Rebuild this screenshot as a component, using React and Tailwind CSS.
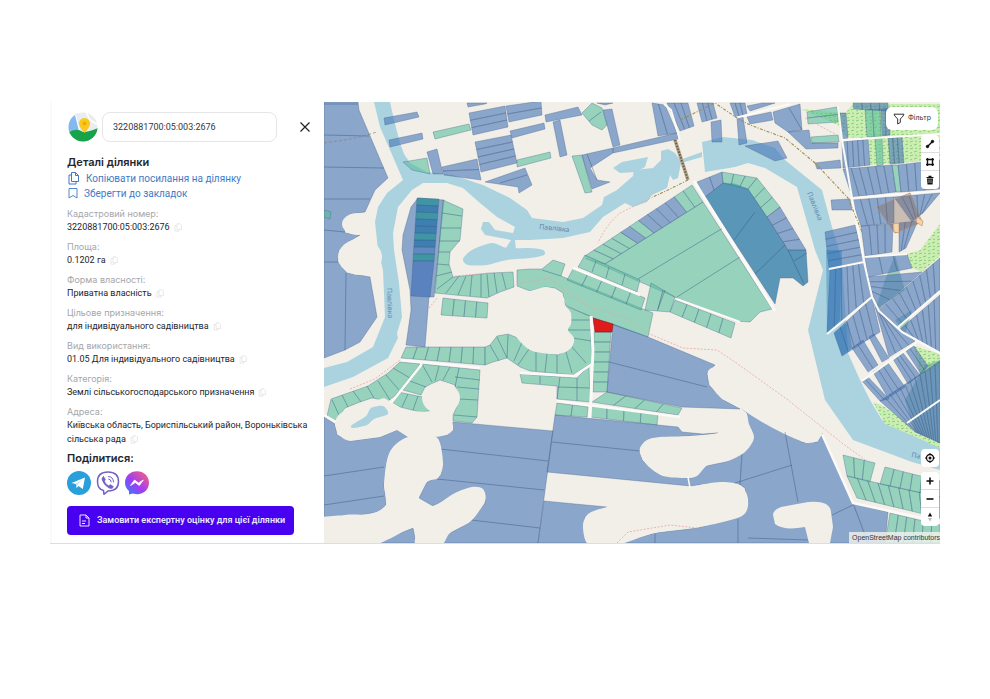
import React from "react";

const BLUE = "#4674b8";
const GREEN = "#58be9e";
const LAND = "#f2efe9";
const WATER = "#aad3df";
const fills = { b: BLUE, g: GREEN, d: "#08669e", t: "#0f8a8c" };

const parse = (s) => s.trim().split(/\s+/).map((p) => p.split(",").map(Number));

function Plot({ t = "b", p, o = 0.6 }) {
  return <polygon points={p} fill={fills[t]} fillOpacity={o} stroke="#3d5a80" strokeOpacity="0.55" strokeWidth="0.6" />;
}

/* A four-cornered block cut into n parcels between its first and third side. */
function Block({ t = "b", p, n = 1, kinds, o = 0.6 }) {
  const [a, b, c, d] = parse(p);
  const mix = (u, v, k) => [u[0] + (v[0] - u[0]) * k, u[1] + (v[1] - u[1]) * k];
  return Array.from({ length: n }, (_, i) => {
    const pts = [mix(a, b, i / n), mix(a, b, (i + 1) / n), mix(d, c, (i + 1) / n), mix(d, c, i / n)];
    return <Plot key={i} t={kinds ? kinds[i] : t} o={o} p={pts.map((q) => q.map((v) => v.toFixed(1)).join(",")).join(" ")} />;
  });
}

/* A rounded closed outline through the given points. */
function Blob({ p, fill = LAND }) {
  const pts = parse(p);
  const at = (i) => pts[(i + pts.length) % pts.length];
  const d = pts.map((b, i) => {
    const a = at(i - 1), c = at(i + 1), e = at(i + 2);
    const k = 7;
    return `C${b[0] + (c[0] - a[0]) / k} ${b[1] + (c[1] - a[1]) / k} ${c[0] - (e[0] - b[0]) / k} ${c[1] - (e[1] - b[1]) / k} ${c[0]} ${c[1]}`;
  });
  return <path d={`M${pts[0][0]} ${pts[0][1]}${d.join("")}z`} fill={fill} />;
}

const Line = ({ d }) => <path d={d} fill="none" stroke="#30507a" strokeOpacity="0.7" strokeWidth="0.6" />;
const Road = ({ d, w = 2 }) => <path d={d} fill="none" stroke="#fbfaf7" strokeWidth={w} strokeLinejoin="round" />;
const Trail = ({ d }) => <path d={d} fill="none" stroke="#eba3a3" strokeWidth="0.8" strokeDasharray="2 1.5" />;

const topBlocks = [
  ["b", "384,118 417,112 419,117 385,125", 1],
  ["b", "389,140 422,133 423,139 390,147", 1],
  ["g", "403,162 427,158 430,174 412,170", 1],
  ["g", "433,132 469,124 471,130 435,139", 1],
  ["b", "427,152 437,149 443,174 433,174", 1],
  ["b", "442,167 444,175 481,180 477,159", 2],
  ["b", "467,103 487,103 485,104 468,107", 1],
  ["b", "469,113 473,135 508,127 505,106", 3],
  ["b", "506,106 509,122 542,115 541,101", 2],
  ["b", "510,131 544,123 545,129 512,138", 1],
  ["b", "475,142 481,172 517,163 511,135", 4],
  ["g", "517,160 550,152 551,158 517,167", 1],
  ["b", "545,115 578,107 582,115 546,122", 1],
  ["b", "553,122 560,120 567,155 560,157", 1],
  ["b", "603,110 612,109 620,145 613,147", 1],
  ["g", "572,156 582,155 592,192 585,193", 1],
  ["b", "652,103 665,105 677,133 658,136", 2],
  ["b", "667,103 688,103 694,126 680,131", 3],
  ["b", "697,103 713,103 717,118 702,122", 3],
  ["b", "730,103 745,103 747,114 735,117", 3],
  ["b", "711,122 721,120 722,142 712,142", 1],
  ["b", "747,117 771,112 773,120 750,124", 1],
  ["b", "737,118 743,117 747,143 739,145", 1],
  ["b", "745,146 778,141 787,158 775,161", 1],
  ["b", "747,106 762,103 775,103 750,111", 1],
  ["g", "811,137 838,135 839,142 812,143", 1],
  ["g", "807,112 808,124 838,122 837,107", 2],
  ["b", "840,113 846,113 848,138 842,140", 1],
  ["b", "815,163 840,160 841,168 817,169", 1],
  ["b", "831,200 850,199 852,210 832,210", 1],
  ["g", "865,110 880,109 881,136 867,137", 2],
  ["b", "881,109 890,108 890,135 882,136", 2],
  ["g", "875,138 882,137 883,165 877,166", 1],
  ["b", "888,138 902,137 904,163 890,164", 3],
  ["b", "842,142 868,139 870,165 843,168", 5],
  ["b", "853,103 888,103 888,111 854,109", 4],
  ["b", "843,169 892,165 896,192 852,197", 6],
  ["g", "892,165 898,165 901,192 896,192", 1],
  ["b", "898,165 940,160 940,189 901,192", 5],
  ["b", "852,200 894,197 894,223 861,226", 5],
  ["b", "894,197 940,193 924,212 912,222", 6],
  ["b", "861,226 893,224 892,252 865,256", 4],
  ["b", "899,223 918,221 906,248 899,252", 3],
  ["b", "825,232 829,268 864,262 855,225", 5],
  ["b", "830,270 864,262 871,296 827,333", 6],
  ["b", "865,257 907,254 912,268 868,277", 3],
  ["b", "868,277 873,296 879,309 922,272", 4],
  ["b", "879,310 940,258 940,290 897,327", 9],
  ["b", "899,330 940,295 940,352 910,336", 7],
  ["b", "834,333 872,298 880,332 842,356", 6],
  ["b", "873,299 881,315 915,341 889,357", 4],
  ["b", "852,348 863,340 878,365 868,372", 2],
  ["b", "869,337 874,334 889,358 882,362", 1],
  ["b", "862,381 868,377 889,399 880,401", 2],
  ["b", "873,372 888,363 905,387 888,398", 3],
  ["b", "893,359 903,353 920,375 908,384", 3],
  ["b", "906,351 914,346 928,366 921,374", 2],
  ["b", "880,401 940,361 940,443 915,432", 12],
];

const southBlocks = [
  ["g", "443,298 488,303 487,318 441,315", 4],
  ["g", "406,347 485,347 485,365 401,358", 7],
  ["g", "578,267 585,255 640,280 637,292", 1],
  ["g", "573,269 645,298 641,310 567,280", 5],
  ["g", "651,283 675,297 670,312 645,310", 2],
  ["g", "675,300 735,323 731,338 670,312", 5],
  ["g", "594,332 593,392 607,392 611,332", 6],
  ["g", "607,392 682,408 678,415 592,402", 4],
  ["g", "590,405 658,415 657,425 590,417", 4],
  ["g", "557,403 588,407 587,417 555,415", 2],
  ["g", "843,455 875,463 870,482 847,476", 3],
  ["g", "847,476 940,497 940,518 857,498", 9],
  ["g", "885,467 940,481 940,497 880,484", 6],
  ["g", "890,513 940,525 940,543 885,543", 6],
];

function ParcelMap() {
  return (
    <svg viewBox="324 102 616 441" preserveAspectRatio="xMidYMid slice" className="absolute inset-0 h-full w-full" role="img" aria-label="Кадастрова карта">
      <defs>
        <pattern id="scrub" width="9" height="7" patternUnits="userSpaceOnUse">
          <rect width="9" height="7" fill="#cdeeb2" />
          <path d="M1 2l3-1M5 5l3-1M6 1l2 .5M1 6l2-.5" stroke="#7fcb72" strokeWidth="0.9" />
        </pattern>
      </defs>
      <rect x="324" y="102" width="616" height="441" fill={LAND} />
      <g fill="url(#scrub)">
        <path d="M800 109L845 113 853 104H940V160L870 165 868 139 846 137 838 125 808 112z" />
        <path d="M940 224L920 250 907 254 912 268 922 272 940 256z" />
        <path d="M914 346L940 354V364L920 376z" />
      </g>

      <g fill={WATER}>
        <path d="M374 102H390L394 120 400 143 404 154 410 163 427 172 453 175 483 185 510 198 527 210 532 218 563 222 583 218 602 205 604 197 617 190 633 176 634 170 653 168 661 160 661 151 668 149 675 153 680 160 702 152V157L681 163 678 178 673 180 670 175 667 188 652 195 647 202 633 207 625 203 603 217 590 232 563 238 530 240 515 240 516 250 506 248 511 240 485 235 481 229 483 222 489 222 495 230 513 233 515 227 497 217 480 203 463 188 447 183 423 183 412 190 398 207 393 233 394 250 399 283 402 317 397 333 398 338 388 358 353 377 324 387V368L347 362 373 347 385 317 383 270 378 250 375 222 378 207 387 193 403 180 390 150 380 127z" />
        <path d="M613 168L622 162 648 157 645 167 636 172 620 173z" />
        <path d="M702 142L723 137 752 140 775 148 785 160 822 190 832 227 842 260 848 353 860 380 870 400 882 420 912 433 940 447V470L912 462 853 440 825 400 808 330 823 270 815 250 797 187 765 168 748 163 735 167 705 172z" />
      </g>
      <Blob fill={WATER} p="463,259 472,250 492,243 507,248 530,248 543,250 544,255 530,258 507,260 487,265 468,265" />
      <path d="M873 402L883 406 907 423 915 433 940 442V448L911 435 885 424z" fill="url(#scrub)" />
      <path d="M895 255L905 290 875 310 885 280zM905 335L895 320 912 310zM940 360V443L915 432 905 400 925 365z" fill="#429c82" fillOpacity="0.45" />

      <Plot p="324,102 358,102 359,110 388,178 375,190 365,212 350,214 343,223 345,233 360,235 348,242 339,250 338,262 347,273 370,277 377,317 360,342 345,350 324,358" />
      <Line d="M324 104H358M324 135L369 136M324 167L384 168M324 199L370 199M324 230L345 232M324 262H338M346 273L345 350" />
      <ellipse cx="358" cy="224" rx="16" ry="11" fill={LAND} />
      <ellipse cx="360" cy="257" rx="22" ry="18" fill={LAND} />
      <Plot t="g" p="324,210 331,212 330,219 324,217" />
      <path d="M324 143L345 140 360 137 377 132" fill="none" stroke="#86817a" strokeWidth="0.7" strokeDasharray="3 2" />
      {topBlocks.map(([t, p, n]) => <Block key={p} t={t} p={p} n={n} />)}
      <path d="M826 250H842L840 320 827 333zM834 333L848 322 852 348 842 356z" fill="#1d6cb0" fillOpacity="0.35" />
      <Plot p="485,182 525,168 532,185 519,193 518,187" />
      <Line d="M500 183L527 175" />
      <Plot t="g" p="582,113 592,103 602,108 607,125 602,130 592,125" />
      <Line d="M589 121L601 112" />
      <Plot p="597,103 613,103 605,105" />
      <Plot p="582,155 613,148 677,133 678,139 613,153 590,168 597,180 610,182 592,189" />
      <Line d="M587 154L597 180M613 148V153" />
      <Plot p="773,112 800,104 802,130 788,132 775,123" />
      <Line d="M789 108L802 130" />
      <Plot p="788,132 809,130 811,143 838,143 838,148 806,149" />

      <Plot p="418,198 444,200 434,297 429,297 425,347 406,345 411,310 410,290 402,250 403,235 411,207" />
      <Block p="417,198 413,261 434,261 439,199" n={9} kinds={["t", "d", "t", "d", "d", "t", "d", "b", "t"]} />
      <Plot t="b" o={0.7} p="413,261 434,261 430,297 411,296" />
      <Plot t="g" p="443,200 463,209 460,240 450,252 449,264 453,277 490,273 513,272 514,287 500,292 487,298 455,295 435,293" />
      <Line d="M442 213L462 216M441 228L461 228M439 241L460 241M438 252L450 252M437 264L449 265M436 276L452 272M437 289L453 277M446 293L459 276M458 295L466 276M470 296L472 275M481 297V274M489 297L487 274M497 293L494 273M506 289L502 273" />

      <Block p="585,256 692,185 703,202 605,264" n={12} kinds={["g", "g", "g", "g", "b", "g", "b", "b", "b", "b", "g", "g"]} />
      <Plot t="g" p="605,264 703,202 772,309 760,312 750,322 735,321 677,298 585,258" />
      <Line d="M723 228L638 279M740 257L677 297" />
      <Plot t="d" o={0.65} p="705,197 723,183 735,184 748,189 767,217 788,250 806,250 808,282 803,286 793,278 780,278 775,304" />
      <Line d="M734 240L755 212M788 250L804 284M794 261L807 253M755 274L785 245" />
      <Block p="697,182 722,172 723,183 705,197" n={2} />
      <Block t="g" p="722,172 757,178 748,189 723,183" n={3} />
      <Block t="g" p="757,178 780,207 767,217 748,189" n={3} />
      <Block p="780,207 806,250 788,250 767,217" n={4} />
      <Road d="M694 181L775 311" w={3} />

      <Plot t="g" p="517,270 530,269 542,269 553,260 565,264 561,276 653,313 648,337 593,318 565,305 563,293 555,288 545,287 530,291 517,286" />
      <Line d="M542 270L561 276" />
      {southBlocks.map(([t, p, n]) => <Block key={p} t={t} p={p} n={n} />)}
      <Line d="M596 261L592 272M609 267L606 278M625 274L622 285M658 309L665 290" />
      <Plot t="g" p="485,347 490,345 497,336 508,334 523,340 530,350 558,355 572,347 573,337 567,330 572,317 563,305 590,316 592,363 573,375 530,371 520,367 507,358 493,362 485,365" />
      <Line d="M497 337L507 358M490 345L499 361M508 335L507 358M523 340L514 361M529 349L518 365M536 352V371M547 354L545 372M557 355L557 373M566 352L572 373M572 347L586 363M573 338L591 341M568 330H591M571 320H591" />
      <Blob p="530,291 545,287 556,290 564,298 565,305 571,313 571,324 568,330 574,338 572,347 563,353 550,354 530,350 515,335 505,310 515,292" />
      <Plot t="g" p="520,374 577,378 589,366 590,402 557,399 557,386 522,383" />
      <Line d="M540 376V384M560 377L557 399M577 378V401M558 387L590 388" />
      <Plot t="g" p="327,416 331,399 368,386 388,373 400,362 420,364 397,394 388,401 372,398 360,402 345,408 335,421" />
      <Line d="M342 395L348 407M353 391L361 402M367 386L374 398M378 381L390 400M386 375L399 390M393 368L410 378M332 400L339 415" />
      <Plot t="g" p="422,364 480,370 477,417 472,423 453,421 453,415 460,400 455,385 440,380 425,387 421,395 403,390" />
      <Line d="M410 381L426 387M422 364L432 382M439 366L435 381M450 367L443 380M459 368L455 387M455 377L480 380M457 387L479 389M459 399L478 400M454 415L477 417" />
      <Plot t="g" p="398,392 423,397 437,410 420,412 400,407 391,402" />
      <Line d="M408 394L402 407M418 396L413 410" />
      <Plot p="613,324 648,337 715,365 707,373 709,385 722,399 740,409 682,407 607,392" />
      <Line d="M609 362L707 387" />
      <polygon points="593,318 613,324 612,332 595,332" fill="#e01b1b" stroke="#861717" strokeWidth="0.6" />

      <Plot p="324,417 335,424 337,435 350,441 380,437 397,430 408,437 393,447 387,460 384,485 386,505 378,512 360,515 324,520" />
      <Line d="M324 476L384 467M324 505L384 496" />
      <Plot p="375,543 413,528 416,543" />
      <Plot p="453,422 553,431 538,543 440,543 450,533 470,522 485,503 483,490 470,488 433,506 419,498 427,482 441,475 442,465 433,437 448,435" />
      <Line d="M440 449L548 461M437 479L544 490M471 520L540 528" />
      <Plot p="555,415 658,425 678,427 682,432 703,434 718,433 690,436 653,438 640,450 642,460 660,475 688,478 702,467 725,462 742,453 740,485 717,483 690,486 547,472" />
      <Line d="M552 442L640 451" />
      <Plot p="544,501 607,507 585,517 585,530 589,543 538,543" />
      <Plot p="617,543 655,533 697,528 740,517 747,503 745,488 740,485 742,453 753,440 752,430 745,426 747,413 735,403 772,425 802,442 818,442 822,433 853,503 868,543" />
      <Plot p="853,503 888,512 885,543 868,543" />
      <path d="M773 515Q773 510 781 507L808 502Q830 500 831 512L833 527 830 543H809L805 527Q784 531 775 524z" fill={LAND} />
      <g fill={LAND}>
        <ellipse cx="441" cy="398" rx="19" ry="16" />
        <path d="M335 425Q334 413 354 407L384 398Q397 405 405 411L435 412Q455 415 453 430 448 437 433 437L408 437 397 430 380 437 350 441Q338 439 335 425z" />
        <path d="M735 370Q762 372 790 400 820 420 822 433 820 444 806 443 775 432 740 408L722 399Q706 384 708 371 713 363 735 370z" />
      </g>
      <Blob p="433,436 440,443 443,465 438,478 427,482 419,498 433,506 455,493 472,487 483,489 485,501 471,521 450,533 440,547 416,547 413,528 375,545 310,560 310,522 345,515 370,514 386,505 384,485 387,460 393,447 408,437" />
      <Blob p="641,456 640,448 647,440 660,437 690,436 718,433 735,418 746,413 749,424 754,438 745,452 728,461 708,465 697,476 686,478 663,476 648,466" />
      <Blob p="588,514 607,507 640,500 690,487 720,482 740,485 748,499 742,516 700,527 655,533 617,545 589,545 583,527" />
      <Blob fill={WATER} p="352,425 366,416 371,408 383,406 388,414 374,419 367,425 353,428" />
      <Line d="M735 483L792 465M785 432L798 502M832 515L853 505M748 538L808 540M738 519V543M655 534V543" />
      <Road d="M688 477L690 488" w={1.5} />

      <Road d="M573 268L640 295" w={2.5} />
      <Road d="M677 299L740 322" />
      <Road d="M591 316L593 350 590 418" w={3} />
      <Road d="M520 373L574 376 592 364M401 360L480 368M422 364L391 403M557 401L680 417" w={2.5} />
      <Road d="M324 415L336 422M822 434L853 503 940 522" w={2.5} />
      <Road d="M664 104L671 110 680 140M735 118L790 104M838 106L842 140 852 198 864 262 872 297 879 311 902 332 940 353M852 198L940 191M842 140L940 134M829 269L864 262M865 257L907 254M827 334L872 297M897 328L940 291M862 381L917 342M907 423L940 400" />
      <path d="M675 140L688 180" fill="none" stroke="#b2a48d" strokeWidth="3.5" />
      <path d="M675 140L688 180" fill="none" stroke="#665b46" strokeWidth="2" strokeDasharray="1.5 1.5" />
      <path d="M680 120L715 103 737 118 750 125 785 138 815 163 848 198 862 232M688 180L670 189 653 197" fill="none" stroke="#a18b50" strokeWidth="1.1" strokeDasharray="3 1.5 1 1.5" />
      <Trail d="M653 197L620 213Q606 225 598 243" />
      <Trail d="M350 389L375 379 400 360M429 308L438 297M455 276L490 273M517 284L550 278 567 293 590 307 625 318 652 335 683 348 717 350 735 362 788 400 842 443 868 462" />
      <Trail d="M617 543L628 532 670 525 697 528M805 118L835 134" />
      <polygon points="877,207 910,193 922,222 895,233" fill="#80614f" fillOpacity="0.35" stroke="#b78462" strokeWidth="0.7" />
      <path d="M893 224L899 223 899 233 894 232zM917 217L923 221 922 226 916 222z" fill="#f4d4ae" stroke="#bd8960" strokeWidth="0.6" />
      <g fill="#5f87b3" fontSize="7" className="font-['Noto_Sans',sans-serif]">
        <text transform="translate(539 229) rotate(6)">Павлівка</text>
        <text transform="translate(387 288) rotate(88)">Павлівка</text>
        <text transform="translate(807 193) rotate(68)">Павлівка</text>
        <text transform="translate(911 457) rotate(12)">Па</text>
      </g>
    </svg>
  );
}

const CopyMark = () => (
  <button type="button" aria-label="Копіювати" className="ml-1 inline-block align-middle text-[#e2e2e4]">
    <svg width="8" height="10" viewBox="0 0 8 10" fill="none" stroke="currentColor" strokeWidth="0.8">
      <path d="M3 .8h3l1.4 1.4V6.600H3zM3 2.500H1v5.600h4V6.600" />
    </svg>
  </button>
);

const details = [
  ["Кадастровий номер:", "3220881700:05:003:2676"],
  ["Площа:", "0.1202 га"],
  ["Форма власності:", "Приватна власність"],
  ["Цільове призначення:", "для індивідуального садівництва"],
  ["Вид використання:", "01.05 Для індивідуального садівництва"],
  ["Категорія:", "Землі сільськогосподарського призначення"],
  ["Адреса:", "Київська область, Бориспільський район, Вороньківська сільська рада"],
];

function Sidebar() {
  return (
    <aside className="w-[274px] shrink-0 border-l-2 border-[#fafafa] pr-3 pl-[15px] pt-[10px] text-[#24262c]">
      <div className="flex items-center">
        <svg width="30" height="30" viewBox="0 0 30 30" className="mr-1 ml-px shrink-0" aria-hidden="true">
          <clipPath id="disc"><circle cx="15" cy="15" r="14.500" /></clipPath>
          <g clipPath="url(#disc)">
            <rect width="30" height="30" fill="#ebecee" />
            <path d="M0 0H8L12 18 0 22z" fill="#82b9ee" />
            <path d="M7 0L12 20M18 0L22 8 30 13" stroke="#fff" strokeWidth="1.5" fill="none" />
            <path d="M0 21Q8 15 15 20 21 20 30 16V30H0z" fill="#16a34a" />
            <path d="M16.500 21Q11 15 11 11.500a5.500 5.500 0 0 1 11 0Q22 15 16.500 21z" fill="#f9c91d" />
            <circle cx="16.500" cy="11.500" r="2" fill="#efaa0a" />
          </g>
        </svg>
        <input aria-label="Кадастровий номер ділянки" defaultValue="3220881700:05:003:2676" className="h-[30px] w-[175px] rounded-lg border border-[#e6e6e8] bg-white px-[10px] font-['Roboto',sans-serif] text-[9px] text-[#35373b] outline-none" />
        <button type="button" aria-label="Закрити" className="ml-[22px]">
          <svg width="12" height="12" viewBox="0 0 12 12" stroke="#202124" strokeWidth="1.2"><path d="M1.500 1.500l9 9M10.500 1.500l-9 9" /></svg>
        </button>
      </div>
      <h2 className="mt-[13px] text-[11px] leading-[15px] font-semibold">Деталі ділянки</h2>
      <a href="#copy" className="flex h-4 items-center gap-[6px] font-['Roboto',sans-serif] text-[10px] text-[#3f7ac6]">
        <svg width="13" height="14" viewBox="0 0 13 14" fill="none" stroke="currentColor" strokeWidth="1"><path d="M4.500 1.500h4l3 3v6h-7zM8.500 1.500v3h3M4.500 4H2v9h7v-2.500" /></svg>
        Копіювати посилання на ділянку
      </a>
      <a href="#save" className="flex h-[14px] items-center gap-[5px] font-['Roboto',sans-serif] text-[10px] text-[#3f7ac6]">
        <svg width="12" height="12" viewBox="0 0 12 12" fill="none" stroke="currentColor" strokeWidth="0.9"><path d="M2 1.500h8v9.500L6 8.500 2 11z" /></svg>
        Зберегти до закладок
      </a>
      <dl className="mt-[7px] flex flex-col gap-[6px] text-[9px]">
        {details.map(([k, v]) => (
          <div key={k}>
            <dt className="leading-[13px] text-[#a5a6aa]">{k}</dt>
            <dd className="font-['Roboto',sans-serif] leading-[14px]">{v}<CopyMark /></dd>
          </div>
        ))}
      </dl>
      <h2 className="mt-[5px] text-[11px] leading-[15px] font-semibold">Поділитися:</h2>
      <div className="mt-[5px] flex gap-[5px]">
        <a href="#telegram" aria-label="Telegram">
          <svg width="24" height="24" viewBox="0 0 24 24"><circle cx="12" cy="12" r="12" fill="#29a0dc" /><path d="M4.500 12L18 6.500 15.800 18 11.500 15l-2 2-.7-4z" fill="#fff" /><path d="M8.800 13L15.500 8.500 10.300 13.600 9.500 17z" fill="#b5d9ed" /></svg>
        </a>
        <a href="#viber" aria-label="Viber">
          <svg width="24" height="24" viewBox="0 0 24 24" fill="none" stroke="#7360c4" strokeWidth="1.500" strokeLinecap="round"><path d="M7.500 19.500C3 18.500 1.500 16 1.500 10.500S4 1 12 1s10.500 4 10.500 9.500S20 20 12 20L8 23.300z" /><path d="M7.500 5.500l2 3-1 1.700q1.200 3.500 4.200 4.600l1.700-1.300 3 2-1 1.800q-1 .8-3.500-.4Q7.500 14 6 8.500 5.600 6.400 7.500 5.500z" fill="#7360c4" strokeWidth="0.500" /><path d="M12.500 5.500q5 .2 5 5.500M12.700 8q2.500.3 2.500 3" strokeWidth="1" /></svg>
        </a>
        <a href="#messenger" aria-label="Messenger">
          <svg width="24" height="24" viewBox="0 0 24 24"><defs><linearGradient id="msg" x1="0" y1="1" x2="1" y2="0"><stop stopColor="#2585ff" /><stop offset=".45" stopColor="#a13cf3" /><stop offset="1" stopColor="#ff6672" /></linearGradient></defs><path d="M12 .3C5 .3 0 5.200 0 11.700q0 5 4 8.300V23.600L8 22.500Q10 23.200 12 23.200c7 0 12-5 12-11.500S19 .3 12 .3z" fill="url(#msg)" /><path d="M5.500 14.500l4-5.500 4 3 4.800-3-4 5.500-4-3z" fill="#fff" stroke="#fff" strokeWidth="0.800" strokeLinejoin="round" /></svg>
        </a>
      </div>
      <button type="button" className="mt-[11px] flex h-[29px] w-[227px] items-center gap-[7px] rounded bg-[#4800f0] pl-3 font-['Roboto',sans-serif] text-[9px] font-semibold whitespace-nowrap text-[#ede7ff]">
        <svg width="11" height="13" viewBox="0 0 11 13" className="shrink-0" fill="none" stroke="currentColor" strokeWidth="1"><path d="M1 1h6l3 3v8H1zM7 1v3h3M3 7h4M3 9.500h3" /></svg>
        Замовити експертну оцінку для цієї ділянки
      </button>
    </aside>
  );
}

const Tool = ({ label, children }) => (
  <button type="button" aria-label={label} className="grid h-[18px] w-[18px] place-items-center text-[#111]">
    <svg width="10" height="10" viewBox="0 0 10 10" fill="none" stroke="currentColor">{children}</svg>
  </button>
);

export default function App() {
  return (
    <main className="min-h-screen bg-white px-[50px] pt-[102px] font-['Inter',sans-serif]">
      <div className="flex border-b border-[#dededf]">
        <Sidebar />
        <section className="relative min-h-[441px] min-w-0 flex-1 overflow-hidden">
          <ParcelMap />
          <button type="button" className="absolute top-[5px] right-[2px] flex h-[23px] w-[52px] items-center justify-center gap-[3px] rounded-md bg-white text-[7px] text-[#333]">
            <svg width="12" height="12" viewBox="0 0 12 12" fill="none" stroke="#333" strokeLinejoin="round"><path d="M1 1.200h10Q11 2.500 7.300 6v3.500L4.700 11V6Q1 2.500 1 1.200z" /></svg>
            Фільтр
          </button>
          <div className="absolute top-[33px] right-px flex flex-col divide-y divide-[#ddd] rounded-sm bg-white">
            <Tool label="Виміряти відстань"><path d="M2.500 7.500l5-5" strokeWidth="1.500" /><circle cx="2.500" cy="7.500" r="1.200" fill="currentColor" /><circle cx="7.500" cy="2.500" r="1.200" fill="currentColor" /></Tool>
            <Tool label="Виміряти площу"><path d="M2.500 1v8M7.500 1v8M1 2.500h8M1 7.500h8" strokeWidth="1.400" /></Tool>
            <Tool label="Видалити"><path d="M1.500 2.500h7M3.500 1.300h3" strokeWidth="1.200" /><path d="M2 3.500h6l-.5 6h-5z" fill="currentColor" stroke="none" /><path d="M4 4.500v3.500M6 4.500v3.500" stroke="#fff" strokeWidth="0.600" /></Tool>
          </div>
          <div className="absolute right-px bottom-[17px] flex flex-col gap-[5px]">
            <div className="rounded-sm bg-white">
              <Tool label="Моє місце"><circle cx="5" cy="5" r="3.500" strokeWidth="1.300" /><circle cx="5" cy="5" r="1.500" fill="currentColor" stroke="none" /><path d="M5 0v2M5 8v2M0 5h2M8 5h2" /></Tool>
            </div>
            <div className="flex flex-col divide-y divide-[#ddd] rounded-sm bg-white">
              <Tool label="Наблизити"><path d="M5 1.500v7M1.500 5h7" strokeWidth="1.600" /></Tool>
              <Tool label="Віддалити"><path d="M1.500 5h7" strokeWidth="1.600" /></Tool>
              <Tool label="На північ"><path d="M5 .5l2.200 4H2.800z" fill="currentColor" stroke="none" /><path d="M5 9.500l2-3.500H3z" fill="#bbb" stroke="none" /></Tool>
            </div>
          </div>
          <a href="#osm" className="absolute right-0 bottom-0 bg-[#f2f2ee]/80 pl-[3px] font-['Liberation_Sans',sans-serif] text-[7px] leading-[11px] text-[#353535]">OpenStreetMap contributors</a>
        </section>
      </div>
    </main>
  );
}
